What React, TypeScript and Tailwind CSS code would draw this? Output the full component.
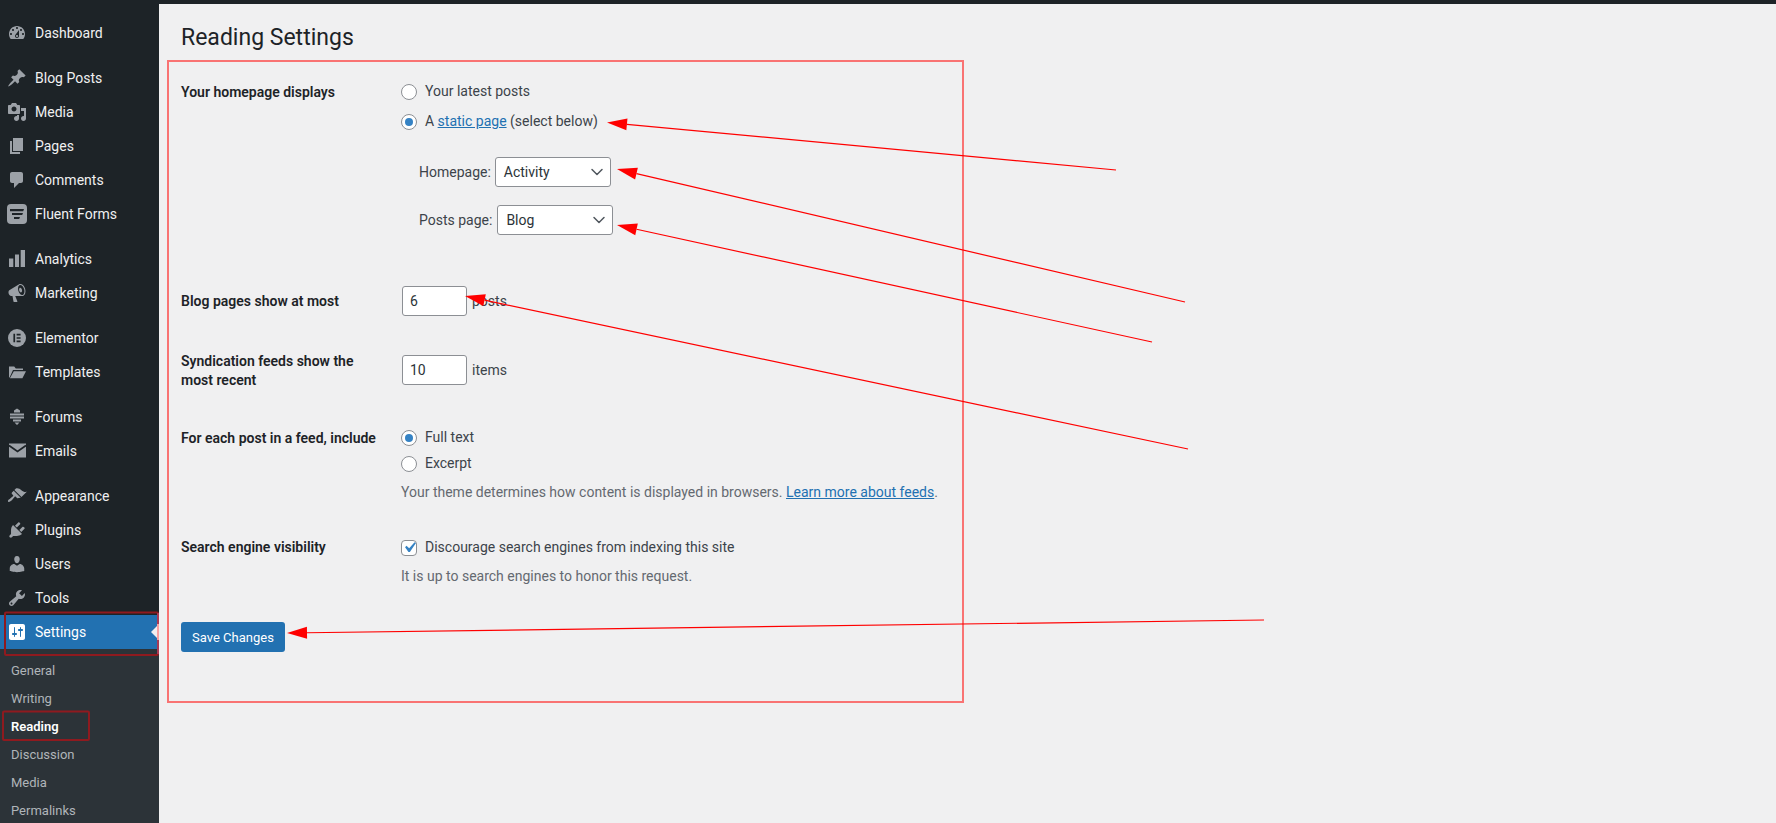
import type { ReactNode } from "react";
import { ChevronDown } from "lucide-react";

const Dash = ({ d, children }: { d?: string; children?: ReactNode }) => (
  <svg viewBox="0 0 20 20" className="w-5 h-5 shrink-0" fill="currentColor">
    {d && <path d={d} />}
    {children}
  </svg>
);

const icons: Record<string, ReactNode> = {
  dashboard: <Dash d="M3.76 16h12.48c1.1-1.37 1.76-3.11 1.76-5 0-4.42-3.58-8-8-8s-8 3.58-8 8c0 1.89.66 3.63 1.76 5zM10 4c.55 0 1 .45 1 1s-.45 1-1 1-1-.45-1-1 .45-1 1-1zM6 6c.55 0 1 .45 1 1s-.45 1-1 1-1-.45-1-1 .45-1 1-1zm8 0c.55 0 1 .45 1 1s-.45 1-1 1-1-.45-1-1 .45-1 1-1zm-5.37 5.55L12 7v6c0 1.1-.9 2-2 2s-2-.9-2-2c0-.57.24-1.08.63-1.45zM4 10c.55 0 1 .45 1 1s-.45 1-1 1-1-.45-1-1 .45-1 1-1zm12 0c.55 0 1 .45 1 1s-.45 1-1 1-1-.45-1-1 .45-1 1-1zm-5 3c0-.55-.45-1-1-1s-1 .45-1 1 .45 1 1 1 1-.45 1-1z" />,
  pin: <Dash d="M10.44 3.02l1.82-1.82 6.36 6.35-1.83 1.82c-1.05-.68-2.48-.57-3.41.36l-.75.75c-.92.93-1.04 2.35-.35 3.41l-1.83 1.82-2.41-2.41-2.8 2.79c-.42.42-3.38 2.71-3.8 2.29s1.86-3.39 2.28-3.81l2.79-2.79L4.1 9.36l1.83-1.82c1.05.69 2.48.57 3.4-.36l.75-.75c.93-.92 1.05-2.35.36-3.41z" />,
  media: <Dash d="M13 11V4c0-.55-.45-1-1-1h-1.67L9 1H5L3.67 3H2c-.55 0-1 .45-1 1v7c0 .55.45 1 1 1h10c.55 0 1-.45 1-1zM7 4.5c1.38 0 2.5 1.12 2.5 2.5S8.38 9.5 7 9.5 4.5 8.38 4.5 7 5.62 4.5 7 4.5zM14 6h5v10.5c0 1.38-1.12 2.5-2.5 2.5S14 17.88 14 16.5s1.12-2.5 2.5-2.5c.17 0 .34.02.5.05V9h-3V6zm-4 8.05V13h2v3.5c0 1.38-1.12 2.5-2.5 2.5S7 17.88 7 16.5 8.12 14 9.5 14c.17 0 .34.02.5.05z" />,
  pages: <Dash d="M6 15V2h10v13H6zm-1 1h8v2H3V5h2v11z" />,
  comments: <Dash d="M5 2h9c1.1 0 2 .9 2 2v7c0 1.1-.9 2-2 2h-2l-5 5v-5H5c-1.1 0-2-.9-2-2V4c0-1.1.9-2 2-2z" />,
  fluent: (
    <Dash>
      <rect x="0" y="0" width="20" height="20" rx="4" />
      <path d="M3 5h14l-.8 2.2H3zM5 9h11l-.8 2H5zM7 13h6l-.8 2H7z" fill="#1d2327" />
    </Dash>
  ),
  analytics: <Dash d="M2 9.5h4.3V18H2zM8 5.5h4V18H8zM13.7 1H18v17h-4.3z" />,
  marketing: <Dash d="M18.15 5.94c.46 1.62.38 3.22-.02 4.48-.42 1.28-1.26 2.18-2.3 2.48-.16.06-.26.06-.4.06-.06.02-.12.02-.18.02-.06.02-.14.02-.22.02h-6.8l2.22 5.5c.02.14-.06.26-.14.34-.08.1-.24.16-.34.16H6.95c-.1 0-.26-.06-.34-.16-.08-.08-.16-.2-.14-.34l-1-5.5H4.25l-.02-.02c-.5.06-1.08-.18-1.54-.62s-.88-1.08-1.06-1.88c-.24-.8-.2-1.56-.02-2.2.18-.62.58-1.08 1.06-1.3l.02-.02 9-5.4c.1-.06.18-.1.24-.16.06-.04.14-.08.24-.12.16-.08.28-.12.5-.18 1.04-.3 2.24.1 3.22.98s1.84 2.24 2.26 3.86zm-2.58 5.98h-.02c.4-.1.74-.34 1.04-.7.58-.7.86-1.76.86-3.04-.02-.64-.1-1.3-.28-1.98-.34-1.36-1.02-2.5-1.78-3.24s-1.68-1.1-2.46-.88c-.82.22-1.4.96-1.7 2-.32 1.04-.28 2.36.06 3.72.38 1.36 1 2.5 1.8 3.24.78.74 1.62 1.1 2.48.88zm-2.54-7.08c.22-.04.42-.02.62.04.38.16.76.48 1.02 1s.42 1.2.42 1.78c0 .3-.04.56-.12.8-.18.48-.44.84-.86.94-.34.1-.8-.06-1.14-.4s-.64-.86-.78-1.5c-.18-.62-.12-1.24.02-1.72s.48-.84.82-.94z" />,
  elementor: (
    <Dash>
      <circle cx="10" cy="10" r="9" />
      <path d="M6.4 5.8h1.7v8.4H6.4zM9.6 5.8h4v1.7h-4zM9.6 9.15h4v1.7h-4zM9.6 12.5h4v1.7h-4z" fill="#1d2327" />
    </Dash>
  ),
  templates: <Dash d="M2 15.5V4.5h5.2l1.6 2H16v1.6H6L2.6 15.5zM6.8 9.2H19l-3.6 7H2.9z" />,
  forums: <Dash d="M10 1.5l3 2v2H7v-2zM3 6.5h14v2H3zM3 9.5h14v2H3zM6 12.5h8v2H6zM7.5 15.5h5L10 18z" />,
  emails: (
    <Dash>
      <rect x="2" y="2.5" width="17" height="14" />
      <path d="M2 4.5l8.5 6 8.5-6" fill="none" stroke="#1d2327" strokeWidth="1.8" />
    </Dash>
  ),
  appearance: <Dash d="M14.48 11.06L7.41 3.99l1.5-1.5c.5-.56 2.3-.47 3.51.32 1.21.8 1.43 1.28 2.91 2.1 1.18.64 2.45 1.26 4.45.85zm-.71.71L6.7 4.7 4.93 6.47c-.39.39-.39 1.02 0 1.41l1.06 1.06c.39.39.39 1.03 0 1.42-.6.6-1.43 1.11-2.21 1.69-.35.26-.7.53-1.01.84C1.43 13.23.4 14.91 1.2 15.7c.79.8 2.47-.23 3.83-1.59.31-.31.58-.66.84-1.01.58-.78 1.09-1.61 1.69-2.21.39-.39 1.02-.39 1.41 0l1.06 1.06c.39.39 1.02.39 1.41 0z" />,
  plugins: <Dash d="M13.11 4.36L9.87 7.6 8 5.73l3.24-3.24c.35-.34 1.05-.2 1.56.32.52.51.66 1.21.31 1.55zm-8 1.77l.91-1.12 9.01 9.01-1.19.84c-.71.71-2.63 1.16-3.82 1.16H6.14L4.9 17.26c-.59.59-1.54.59-2.12 0-.59-.58-.59-1.53 0-2.12l1.24-1.24v-3.88c0-1.13.4-3.19 1.09-3.89zm7.26 3.97l3.24-3.24c.34-.35 1.04-.21 1.55.31.52.51.66 1.21.31 1.55l-3.24 3.25z" />,
  users: <Dash d="M10 9.25c-2.27 0-2.73-3.44-2.73-3.44C7 4.02 7.82 2 9.97 2c2.16 0 2.98 2.02 2.71 3.81 0 0-.41 3.44-2.68 3.44zm0 2.57L12.72 10c2.39 0 4.52 2.33 4.52 4.53v2.49s-3.65 1.13-7.24 1.13c-3.65 0-7.24-1.13-7.24-1.13v-2.49c0-2.25 1.94-4.48 4.47-4.48z" />,
  tools: <Dash d="M16.68 9.77c-1.34 1.34-3.3 1.67-4.95.99l-5.41 6.52c-.99.99-2.59.99-3.58 0s-.99-2.59 0-3.57l6.52-5.42c-.68-1.65-.35-3.61.99-4.95 1.28-1.28 3.12-1.62 4.72-1.06l-2.89 2.89 2.82 2.82 2.86-2.87c.53 1.58.18 3.39-1.08 4.65zM3.81 16.21c.4.39 1.04.39 1.43 0 .4-.4.4-1.04 0-1.43-.39-.4-1.03-.4-1.43 0-.39.39-.39 1.03 0 1.43z" />,
  settings: <Dash d="M18 16V4c0-1.1-.9-2-2-2H4c-1.1 0-2 .9-2 2v12c0 1.1.9 2 2 2h12c1.1 0 2-.9 2-2zM8 11h1c.55 0 1 .45 1 1s-.45 1-1 1H8v1.5c0 .28-.22.5-.5.5s-.5-.22-.5-.5V13H6c-.55 0-1-.45-1-1s.45-1 1-1h1V5.5c0-.28.22-.5.5-.5s.5.22.5.5V11zm5-2h-1c-.55 0-1-.45-1-1s.45-1 1-1h1V5.5c0-.28.22-.5.5-.5s.5.22.5.5V7h1c.55 0 1 .45 1 1s-.45 1-1 1h-1v5.5c0 .28-.22.5-.5.5s-.5-.22-.5-.5V9z" />,
};

const menu = [
  { label: "Dashboard", icon: "dashboard" },
  { label: "Blog Posts", icon: "pin", sep: true },
  { label: "Media", icon: "media" },
  { label: "Pages", icon: "pages" },
  { label: "Comments", icon: "comments" },
  { label: "Fluent Forms", icon: "fluent" },
  { label: "Analytics", icon: "analytics", sep: true },
  { label: "Marketing", icon: "marketing" },
  { label: "Elementor", icon: "elementor", sep: true },
  { label: "Templates", icon: "templates" },
  { label: "Forums", icon: "forums", sep: true },
  { label: "Emails", icon: "emails" },
  { label: "Appearance", icon: "appearance", sep: true },
  { label: "Plugins", icon: "plugins" },
  { label: "Users", icon: "users" },
  { label: "Tools", icon: "tools" },
];

const submenu = ["General", "Writing", "Reading", "Discussion", "Media", "Permalinks"];

// red annotation arrows: from far end to tip
const arrows = [
  [1116, 170, 607, 122.5],
  [1185, 302, 617, 169],
  [1152, 342, 617, 225],
  [1188, 449, 465, 296],
  [1264, 620, 287, 633],
];

function Radio({ checked }: { checked?: boolean }) {
  return (
    <span className="w-4 h-4 rounded-full border border-[#8c8f94] bg-white flex items-center justify-center shrink-0">
      {checked && <span className="w-2 h-2 rounded-full bg-[#3582c4]" />}
    </span>
  );
}

function Select({ value }: { value: string }) {
  return (
    <div className="w-[116px] h-[30px] flex items-center justify-between pl-2 pr-[3px] bg-white border border-[#8c8f94] rounded-[3px] text-[#2c3338]">
      <span>{value}</span>
      <ChevronDown size={20} strokeWidth={1.8} className="text-[#50575e]" />
    </div>
  );
}

function NumberBox({ value }: { value: string }) {
  return (
    <div className="ml-px w-[65px] h-[30px] flex items-center pl-[7px] bg-white border border-[#8c8f94] rounded-[3px] text-[#2c3338]">
      {value}
    </div>
  );
}

function Row({ label, className, children }: { label: ReactNode; className: string; children: ReactNode }) {
  return (
    <div className={`flex ${className}`}>
      <div className="w-[220px] pr-5 font-semibold text-[#1d2327] leading-[19px]">{label}</div>
      <div>{children}</div>
    </div>
  );
}

export default function App() {
  return (
    <div className="relative h-[823px] overflow-hidden flex flex-col bg-[#f0f0f1] text-[14px] text-[#3c434a] leading-[19px] [font-family:Roboto,sans-serif]">
      <div className="h-1 bg-[#1d2327] shrink-0" />
      <div className="flex flex-1 min-h-0">
        <aside className="w-[159px] bg-[#1d2327] pt-3 shrink-0">
          {menu.map((m) => (
            <div key={m.label} className={`h-[34px] flex items-center gap-2 pl-[7px] text-[#f0f0f1] ${m.sep ? "mt-[11px]" : ""}`}>
              <span className="text-[#9ca1a7]">{icons[m.icon]}</span>
              {m.label}
            </div>
          ))}
          <div className="relative h-[34px] flex items-center gap-2 pl-[7px] bg-[#2271b1] text-white">
            {icons.settings}
            Settings
            <span className="absolute right-0 top-[9px] border-y-8 border-r-8 border-y-transparent border-r-[#f0f0f1]" />
          </div>
          <div className="bg-[#2c3338] py-[7px]">
            {submenu.map((s) => (
              <div key={s} className={`h-7 flex items-center pl-[11px] text-[13px] ${s === "Reading" ? "text-white font-semibold" : "text-[#b0b5b9]"}`}>
                {s}
              </div>
            ))}
          </div>
        </aside>

        <main className="flex-1 pl-[22px]">
          <h1 className="mt-[19px] text-[23px] leading-[29px] text-[#1d2327]">Reading Settings</h1>

          <Row label={<div className="pt-px">Your homepage displays</div>} className="mt-[30px]">
            <div className="flex items-center gap-2">
              <Radio />
              Your latest posts
            </div>
            <div className="flex items-center gap-2 mt-[11px]">
              <Radio checked />
              <span>
                A <span className="text-[#2271b1] underline">static page</span> (select below)
              </span>
            </div>
            <div className="flex items-center gap-1 ml-[18px] mt-[26px]">
              Homepage:
              <Select value="Activity" />
            </div>
            <div className="flex items-center gap-[5px] ml-[18px] mt-[18px]">
              Posts page:
              <Select value="Blog" />
            </div>
          </Row>

          <Row label={<div className="pt-[6px]">Blog pages show at most</div>} className="mt-[51px]">
            <div className="flex items-center gap-[5px]">
              <NumberBox value="6" />
              posts
            </div>
          </Row>

          <Row label="Syndication feeds show the most recent" className="mt-9">
            <div className="flex items-center gap-[5px] mt-[3px]">
              <NumberBox value="10" />
              items
            </div>
          </Row>

          <Row label={<div className="pt-px">For each post in a feed, include</div>} className="mt-[38px]">
            <div className="flex items-center gap-2">
              <Radio checked />
              Full text
            </div>
            <div className="flex items-center gap-2 mt-[7px]">
              <Radio />
              Excerpt
            </div>
            <p className="mt-[10px] text-[#646970]">
              Your theme determines how content is displayed in browsers.{" "}
              <span className="text-[#2271b1] underline">Learn more about feeds</span>.
            </p>
          </Row>

          <Row label="Search engine visibility" className="mt-9">
            <div className="flex items-center gap-2">
              <span className="w-4 h-4 rounded-[4px] border border-[#8c8f94] bg-white flex items-center justify-center shrink-0">
                <svg viewBox="0 0 20 20" className="w-[21px] h-[21px] shrink-0" fill="#3582c4">
                  <path d="M14.83 4.89l1.34.94-5.81 8.38H9.02L5.78 9.67l1.34-1.25 2.57 2.4z" />
                </svg>
              </span>
              Discourage search engines from indexing this site
            </div>
            <p className="mt-[10px] text-[#646970]">It is up to search engines to honor this request.</p>
          </Row>

          <button className="mt-9 w-[104px] h-[30px] rounded-[3px] bg-[#2271b1] text-white text-[13px]">Save Changes</button>
        </main>
      </div>

      {/* annotations drawn on top of the screenshot */}
      <svg className="absolute inset-0 pointer-events-none" width="1776" height="823" fill="none">
        <rect x="168" y="61" width="795" height="641" stroke="#f97373" strokeWidth="2" />
        <rect x="5" y="612.5" width="153" height="42.5" rx="1" stroke="#8f1a1f" strokeWidth="2" />
        <line x1="158" y1="613" x2="158" y2="654" stroke="#a83a55" strokeWidth="2" />
        <rect x="157" y="624" width="2" height="16" fill="#f8a0a0" />
        <rect x="3" y="711.5" width="86" height="28.5" rx="1" stroke="#8f1a1f" strokeWidth="2" />
        {arrows.map(([x1, y1, x2, y2]) => {
          const len = Math.hypot(x1 - x2, y1 - y2);
          const ux = (x1 - x2) / len;
          const uy = (y1 - y2) / len;
          const bx = x2 + ux * 20;
          const by = y2 + uy * 20;
          return (
            <g key={x1}>
              <line x1={x1} y1={y1} x2={bx} y2={by} stroke="#ff0000" strokeWidth="1.2" />
              <polygon points={`${x2},${y2} ${bx - uy * 6},${by + ux * 6} ${bx + uy * 6},${by - ux * 6}`} fill="#ff0000" />
            </g>
          );
        })}
      </svg>
    </div>
  );
}
